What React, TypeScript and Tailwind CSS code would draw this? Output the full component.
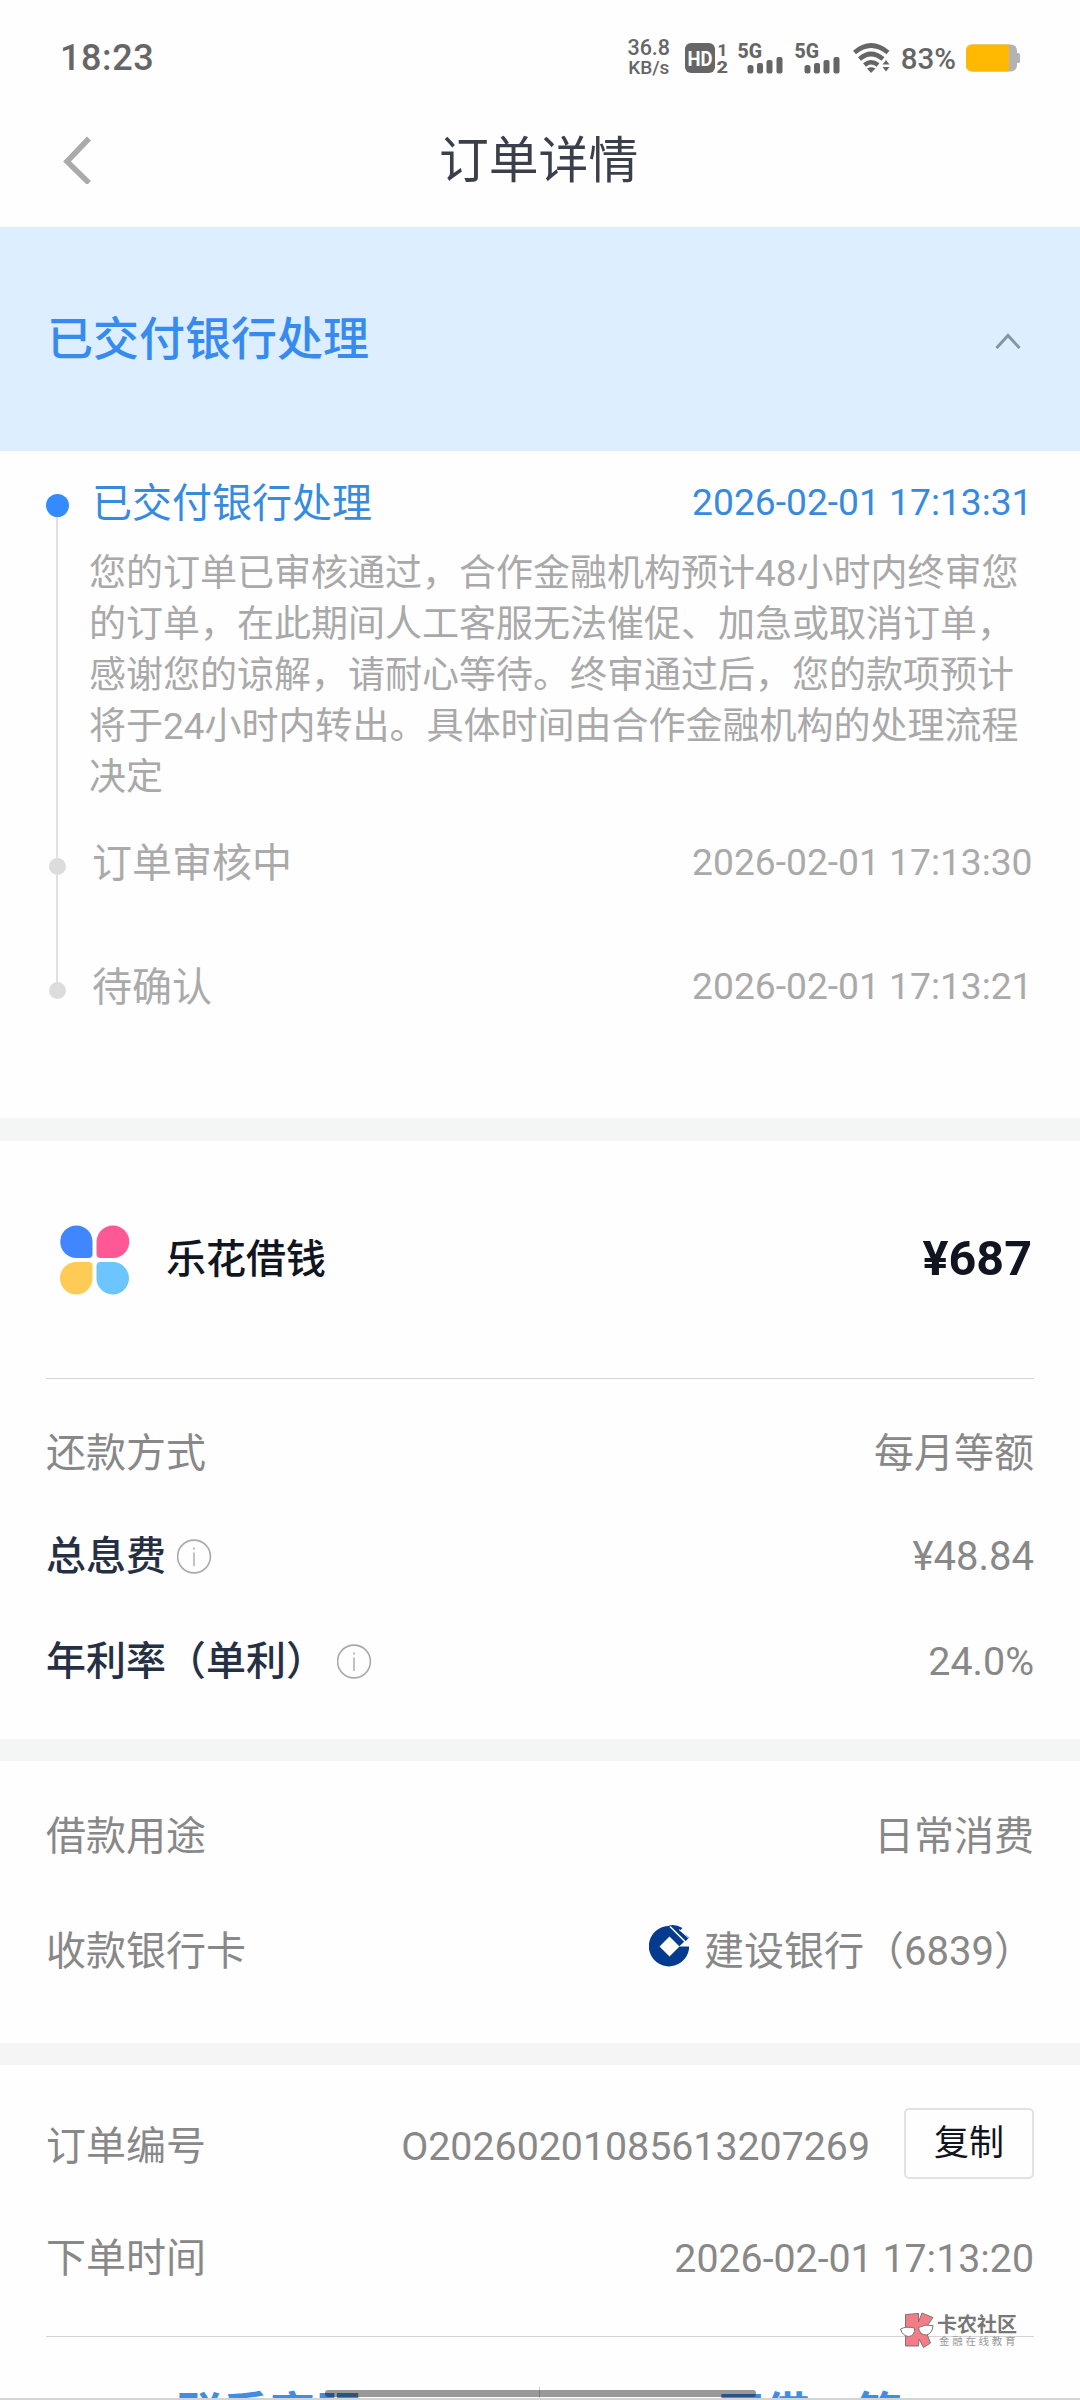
import { ReactNode } from "react";

interface Step {
  title: string;
  time: string;
  active?: boolean;
  lines?: string[];
}

const steps: Step[] = [
  {
    title: "已交付银行处理",
    time: "2026-02-01 17:13:31",
    active: true,
    lines: [
      "您的订单已审核通过，合作金融机构预计48小时内终审您",
      "的订单，在此期间人工客服无法催促、加急或取消订单，",
      "感谢您的谅解，请耐心等待。终审通过后，您的款项预计",
      "将于24小时内转出。具体时间由合作金融机构的处理流程",
      "决定",
    ],
  },
  { title: "订单审核中", time: "2026-02-01 17:13:30" },
  { title: "待确认", time: "2026-02-01 17:13:21" },
];

function Signal() {
  return (
    <svg className="overflow-visible" width="46" height="32" viewBox="0 0 46 32" fill="#666">
      <text x="-0.5" y="15.5" fontSize="20" fontWeight="800" textLength="24.5" lengthAdjust="spacingAndGlyphs">5G</text>
      <rect x="9.5" y="23" width="6" height="8.5" rx="2.5" />
      <rect x="19" y="21" width="6" height="10.5" rx="2" />
      <rect x="28.5" y="18" width="6" height="13.5" rx="2" />
      <rect x="38.5" y="15" width="6" height="16.5" rx="2" />
    </svg>
  );
}

function StatusBar() {
  return (
    <div className="flex h-[92px] items-center pt-[24px] pr-[60px] pl-[60px] font-medium text-[#666]">
      <span className="text-[36px] leading-[40px] tracking-[0.6px]">18:23</span>
      <div className="mr-[14px] -mt-[2px] ml-auto flex w-[44px] flex-col items-center">
        <span className="text-[21.5px] leading-[20px]">36.8</span>
        <span className="text-[19px] leading-[19px]">KB/s</span>
      </div>
      <svg className="mr-[10px] overflow-visible" width="43" height="32" viewBox="0 0 43 32" fill="#666">
        <rect x="0" y="1" width="30" height="30" rx="6" />
        <text x="2.5" y="23.5" fontSize="20" fontWeight="700" fill="#fefefe" textLength="25" lengthAdjust="spacingAndGlyphs">HD</text>
        <text x="32.5" y="13.5" fontSize="17" fontWeight="800">1</text>
        <text x="31.500" y="31" fontSize="17" fontWeight="800" textLength="11.500" lengthAdjust="spacingAndGlyphs">2</text>
      </svg>
      <div className="mr-[12px] flex gap-[11px]">
        <Signal />
        <Signal />
      </div>
      <svg className="mr-[11px]" width="37" height="32" viewBox="0 0 37 32" fill="none" stroke="#666" strokeWidth="4.6">
        <path d="M1.5 10.5 Q18 -3.5 35 10.5" />
        <path d="M6.5 17 Q18 7 30 17" />
        <path d="M11.5 23 Q18 17.5 25 23" />
        <path d="M14 26.5 Q18 24 22.500 26.500 L18 31 Z" fill="#666" stroke="none" />
        <path d="M29.500 22.500 L33 18 L36.500 22.500 Z M29.500 25 L33 29.500 L36.500 25 Z" fill="#666" stroke="none" />
      </svg>
      <span className="mt-[2px] mr-[10px] text-[29.5px] leading-[40px]">83%</span>
      <svg width="54" height="28" viewBox="0 0 54 28">
        <rect x="0" y="0.500" width="51" height="27" rx="6" fill="#b3b3b3" />
        <rect x="50" y="9" width="4" height="10" rx="1.500" fill="#b3b3b3" />
        <path d="M6 0.500 H43 V27.500 H6 A6 6 0 0 1 0 21.500 V6.500 A6 6 0 0 1 6 0.500 Z" fill="#ffb900" />
      </svg>
    </div>
  );
}

function InfoIcon() {
  return (
    <svg className="-mt-[2px]" width="35" height="35" viewBox="0 0 35 35" fill="none" stroke="#aaa">
      <circle cx="17" cy="17.500" r="16.400" strokeWidth="1.600" />
      <path d="M17 13.500 V27" strokeWidth="1.400" />
      <path d="M17 8.500 V10.500" strokeWidth="1.600" />
    </svg>
  );
}

function AppLogo() {
  return (
    <svg width="70" height="70" viewBox="0 0 70 70">
      <path d="M16.500 0.500 A16 16 0 0 1 32.500 16.500 V29 Q32.500 33 28.500 33 H16.500 A16.250 16.250 0 0 1 16.500 0.500 Z" fill="#4086ff" />
      <path d="M53 0.500 A16.250 16.250 0 0 1 53 33 H40.500 Q36.500 33 36.500 29 V17 A16.500 16.500 0 0 1 53 0.500 Z" fill="#ff5896" />
      <path d="M16.500 37 H28.500 Q32.500 37 32.500 41 V53.500 A16.250 16.250 0 1 1 16.500 37 Z" fill="#ffcb57" />
      <path d="M40.500 37 H53 A16.250 16.250 0 1 1 36.500 53.500 V41 Q36.500 37 40.500 37 Z" fill="#6cc5ff" />
    </svg>
  );
}

function BankLogo() {
  return (
    <svg width="41" height="43" viewBox="0 0 41 43">
      {/* ring with a square hole, open to the right */}
      <path d="M20.500 2 A20.200 20.200 0 1 0 40 25 V22.500 H30 L20.500 12 L10.500 22.500 L20.500 32.500 L30 22.500 L36 17 L22 2 Z" fill="#053b8e" />
      <path d="M20.500 12.500 L30.500 22.500 L20.500 32.500 L10.500 22.500 Z" fill="#fefefe" />
      <path d="M20 1.500 Q26 -0.500 33.500 4 L31 6.500 L40 13.500 L36.500 17.500 Z" fill="#053b8e" />
      <path d="M21 2.500 L37 18.500" stroke="#fefefe" strokeWidth="1.600" fill="none" />
      <path d="M30 5.500 L39.500 14" stroke="#fefefe" strokeWidth="1" fill="none" />
    </svg>
  );
}

function Watermark() {
  return (
    <div className="absolute top-[2312px] left-[900px] flex gap-[4px]">
      <svg width="34" height="37" viewBox="0 0 34 37" stroke="#777" strokeWidth="1">
        <path d="M5.500 2.500 L18.500 1.500 L18.500 10 L22 1 L33 5.500 L25 17 L30.500 31 L23.500 35.500 L19 27 L18.500 34 L5.500 34 Z" fill="#f47c86" />
        <path d="M0.500 17 Q6 14 14.500 16 Q15 24 8.500 24.500 Q2.500 24 0.500 17 Z" fill="#fefefe" />
        <path d="M18.500 15.500 Q25 12 33 13.500 Q32.500 21.500 26.500 23 Q19.500 23 18.500 15.500 Z" fill="#fefefe" />
      </svg>
      <div className="-ml-px flex flex-col pt-[2px] text-[#777]">
        <span className="text-[20px] leading-[22px] font-bold">卡农社区</span>
        <span className="ml-[2px] text-[10.5px] leading-[12px] tracking-[2.700px] text-[#999]">金融在线教育</span>
      </div>
    </div>
  );
}

function Row({ label, strong, info, children, className }: { label: string; strong?: boolean; info?: string; children: ReactNode; className: string }) {
  return (
    <div className={`flex items-center justify-between pr-[46px] pl-[46px] text-[40px] leading-[60px] text-[#888] ${className}`}>
      <div className="flex items-center">
        <span className={strong ? "font-medium text-[#263044]" : ""}>{label}</span>
        {info && <span className={info}><InfoIcon /></span>}
      </div>
      {children}
    </div>
  );
}

export default function App() {
  return (
    <div className="relative flex h-[2400px] w-[1080px] flex-col overflow-hidden bg-[#fefefe] font-[Roboto,'Noto_Sans_CJK_SC',sans-serif] whitespace-nowrap">
      <StatusBar />

      {/* Header */}
      <header className="flex h-[135px] items-center pl-[63px]">
        <svg width="30" height="48" viewBox="0 0 30 48" fill="none" stroke="#aaa" strokeWidth="5.500">
          <path d="M26 2.500 L4 25.500 L26 47" />
        </svg>
        <h1 className="mt-[3px] ml-[346px] text-[49.8px] leading-[60px] text-[#3a3f4b]">订单详情</h1>
      </header>

      {/* Current state */}
      <section className="flex h-[224px] items-center justify-between bg-[#dceeff] pr-[58px] pl-[47px]">
        <h2 className="text-[46px] leading-[60px] font-medium text-[#378bee]">已交付银行处理</h2>
        <svg className="mt-[4px]" width="28" height="18" viewBox="0 0 28 18" fill="none" stroke="#8795a3" strokeWidth="3">
          <path d="M2.500 16 L14 3.500 L25.500 16" />
        </svg>
      </section>

      {/* Timeline */}
      <section className="flex h-[667px] flex-col pt-[23px] pr-[47.5px] pl-[45px]">
        {steps.map((s, i) => (
          <div key={s.time} className={i === 0 ? "flex h-[360px]" : "flex h-[124px]"}>
            <div className="flex w-[24px] flex-col items-center">
              {s.active ? <i className="mt-[20px] size-[23px] rounded-full bg-[#338bff]" /> : (
                <>
                  <i className="h-[24px] w-[2px] bg-[#e0e0e0]" />
                  <i className="size-[17px] rounded-full bg-[#dcdcdc]" />
                </>
              )}
              {i < steps.length - 1 && <i className="w-[2px] flex-1 bg-[#e0e0e0]" />}
            </div>
            <div className="flex-1 pl-[20px]">
              <div className={s.active ? "flex items-center justify-between pl-[3px] leading-[60px] text-[#378bdf]" : "flex items-center justify-between pl-[3px] leading-[60px] text-[#aaa]"}>
                <span className="text-[40px]">{s.title}</span>
                <span className="-mt-[5px] text-[37.2px]">{s.time}</span>
              </div>
              {s.lines && (
                <p className="mt-[14px] text-[37px] leading-[51px] text-[#a9a9a9]">
                  {s.lines.map(l => <span key={l} className="block">{l}</span>)}
                </p>
              )}
            </div>
          </div>
        ))}
      </section>

      <div className="h-[23px] shrink-0 bg-[#f4f6f6]" />

      {/* Product */}
      <section className="flex h-[598px] flex-col">
        <div className="mx-[46px] flex h-[238px] items-center border-b border-[#d4d4d4] pl-[14px]">
          <AppLogo />
          <span className="ml-[36px] text-[40px] font-medium text-[#11151f]">乐花借钱</span>
          <span className="mr-[2px] ml-auto text-[48.500px] font-bold text-[#11151f]">¥687</span>
        </div>
        <Row label="还款方式" className="mt-[45px] h-[60px]">
          <span>每月等额</span>
        </Row>
        <Row label="总息费" strong info="ml-[11px]" className="mt-[43px] h-[60px]">
          <span>¥48.84</span>
        </Row>
        <Row label="年利率（单利）" strong info="ml-[11px]" className="mt-[45px] h-[60px]">
          <span className="text-[39.4px]">24.0%</span>
        </Row>
      </section>

      <div className="h-[22px] shrink-0 bg-[#f4f6f6]" />

      {/* Purpose and card */}
      <section className="h-[282px] pt-[46px]">
        <Row label="借款用途" className="h-[60px]">
          <span>日常消费</span>
        </Row>
        <Row label="收款银行卡" className="mt-[55px] h-[60px]">
          <div className="flex items-center">
            <span className="mr-[14px] -mt-[14px]"><BankLogo /></span>
            <span>建设银行（6839）</span>
          </div>
        </Row>
      </section>

      <div className="h-[22px] shrink-0 bg-[#f5f5f5]" />

      {/* Order */}
      <section className="h-[273px] pt-[44px]">
        <Row label="订单编号" className="h-[75px]">
          <div className="flex items-center">
            <span className="text-[39.300px]">O20260201085613207269</span>
            <button className="-mt-[6px] ml-[34px] h-[71px] w-[130px] rounded-[5px] border-2 border-[#e2e2e2] text-[35px] leading-[63px] text-[#11151f]">复制</button>
          </div>
        </Row>
        <Row label="下单时间" className="mt-[45px] h-[60px]">
          <span className="text-[39.300px]">2026-02-01 17:13:20</span>
        </Row>
        <div className="mx-[46px] mt-[47px] h-px bg-[#d4d4d4]" />
      </section>

      {/* Footer actions, cut by the screen edge */}
      <footer className="mt-[49px] flex h-[13px] shrink-0 overflow-hidden border-b-2 border-[#d4d4d4] text-[46px] leading-[54px] font-bold text-[#428de0]">
        <div className="w-1/2 border-r border-[#ccc] text-center">联系客服</div>
        <div className="w-1/2 text-center">再借一笔</div>
      </footer>
      <div className="absolute top-[2390px] left-[325px] h-[7px] w-[431px] rounded-[3px] bg-black/40" />

      <Watermark />
    </div>
  );
}
